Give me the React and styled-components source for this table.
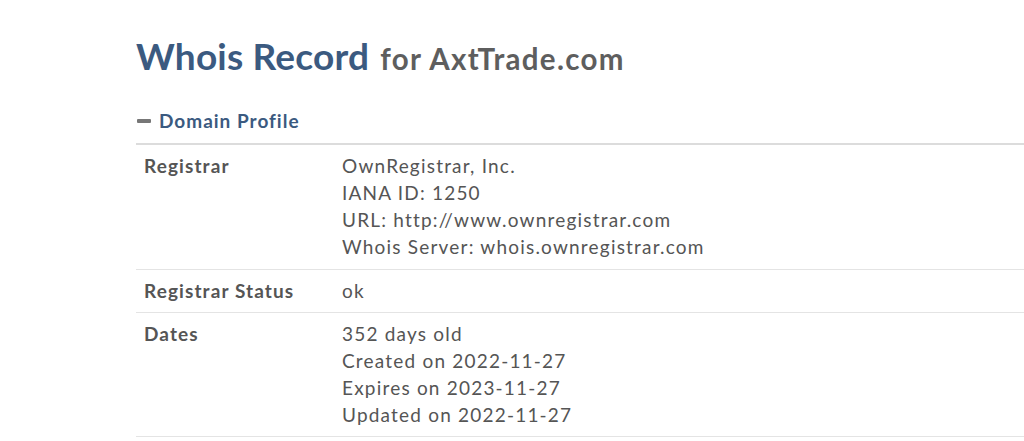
import styled, { createGlobalStyle } from "styled-components";

const GlobalStyle = createGlobalStyle`
  body {
    margin: 0;
    background: #fff;
    font-family: Lato, "Liberation Sans", sans-serif;
    color: #555;
  }
`;

const records = [
  {
    label: "Registrar",
    lines: [
      "OwnRegistrar, Inc.",
      "IANA ID: 1250",
      "URL: http://www.ownregistrar.com",
      "Whois Server: whois.ownregistrar.com",
    ],
  },
  { label: "Registrar Status", lines: ["ok"] },
  {
    label: "Dates",
    lines: [
      "352 days old",
      "Created on 2022-11-27",
      "Expires on 2023-11-27",
      "Updated on 2022-11-27",
    ],
  },
];

export default function App() {
  return (
    <>
      <GlobalStyle />
      <Page>
        <Title>
          Whois Record <Domain>for AxtTrade.com</Domain>
        </Title>
        <SectionHeader>
          <Minus />
          Domain Profile
        </SectionHeader>
        <Table>
          {records.map((r) => (
            <Row key={r.label}>
              <Label>{r.label}</Label>
              <Value>
                {r.lines.map((l) => (
                  <div key={l}>{l}</div>
                ))}
              </Value>
            </Row>
          ))}
        </Table>
      </Page>
    </>
  );
}

const Page = styled.div`
  margin-left: 136px;
  padding-top: 33px;
`;

const Title = styled.h1`
  margin: 0;
  font-size: 37px;
  font-weight: 700;
  line-height: 46px;
  letter-spacing: 0.2px;
  color: #3b5a80;
`;

const Domain = styled.span`
  font-size: 29.5px;
  letter-spacing: 1.3px;
  color: #5e5e5e;
  margin-left: 2px;
`;

const SectionHeader = styled.div`
  display: flex;
  align-items: center;
  gap: 8px;
  margin-top: 27px;
  padding-bottom: 10px;
  font-size: 19px;
  font-weight: 700;
  line-height: 24px;
  letter-spacing: 1px;
  color: #3b5a80;
  border-bottom: 2px solid #dcdcdc;
`;

const Minus = styled.span`
  display: inline-block;
  width: 14px;
  height: 4px;
  border-radius: 1px;
  background: #777;
  margin-left: 1px;
`;

const Table = styled.div`
  display: flex;
  flex-direction: column;
`;

const Row = styled.div`
  display: grid;
  grid-template-columns: 198px 1fr;
  border-bottom: 1px solid #e4e4e4;
  padding: 7px 0 8px;
  font-size: 19px;
  line-height: 27px;
  letter-spacing: 1px;

  &:first-child {
    padding-bottom: 9px;
  }
`;

const Label = styled.div`
  padding-left: 8px;
  font-weight: 700;
  letter-spacing: 1.1px;
  color: #555;
`;

const Value = styled.div`
  padding-left: 8px;
  letter-spacing: 1.2px;
  color: #555;
`;
